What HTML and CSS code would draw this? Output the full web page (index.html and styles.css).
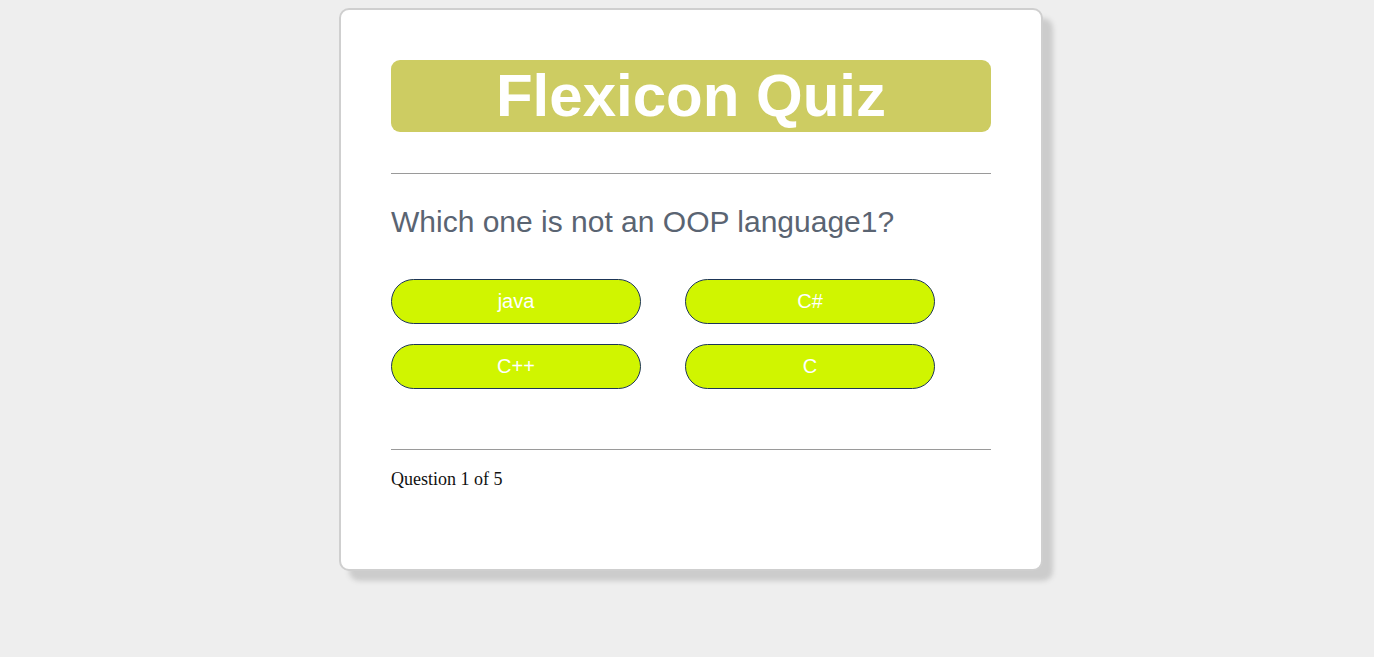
FILE: index.html
```html
<!DOCTYPE html>
<html>
<head>
<meta charset="utf-8">
<link rel="stylesheet" href="styles.css">
</head>
<body>
<div class="page">
  <div class="card">
    <h1 class="title">Flexicon Quiz</h1>
    <div class="rule rule-top"></div>
    <p class="question">Which one is not an OOP language1?</p>
    <div class="answers">
      <button class="answer">java</button>
      <button class="answer">C#</button>
      <button class="answer">C++</button>
      <button class="answer">C</button>
    </div>
    <div class="rule rule-bottom"></div>
    <p class="progress">Question 1 of 5</p>
  </div>
</div>
</body>
</html>
```
FILE: styles.css
```css
html, body {
  margin: 0;
  padding: 0;
  background: #eeeeee;
}
.page {
  display: flex;
  justify-content: center;
  align-items: flex-start;
  padding: 8px 0 0 8px;
  min-height: 100vh;
  box-sizing: border-box;
}
.card {
  box-sizing: border-box;
  width: 704px;
  height: 563px;
  background: #fff;
  border: 2px solid #cfcfcf;
  border-radius: 10px;
  box-shadow: 10px 10px 5px #cccccc;
  padding: 50px 50px 0 50px;
  display: flex;
  flex-direction: column;
}
.title {
  margin: 0;
  height: 72px;
  line-height: 72px;
  background: #cdcc62;
  border-radius: 9px;
  color: #fff;
  text-align: center;
  font-family: "Liberation Sans", Arial, sans-serif;
  font-weight: bold;
  font-size: 60px;
}
.rule {
  border-top: 1px solid #9a9a9a;
  height: 0;
}
.rule-top {
  margin-top: 41px;
}
.question {
  margin: 31px 0 0 0;
  font-family: "Liberation Sans", Arial, sans-serif;
  font-size: 30px;
  line-height: 34px;
  color: #5a6472;
}
.answers {
  margin-top: 40px;
  display: grid;
  grid-template-columns: 250px 250px;
  column-gap: 44px;
  row-gap: 20px;
}
.answer {
  box-sizing: border-box;
  height: 45px;
  border: 1px solid #1d3557;
  border-radius: 23px;
  background: #d0f500;
  color: #fff;
  font-family: "Liberation Sans", Arial, sans-serif;
  font-size: 20px;
  padding: 0;
  cursor: pointer;
}
.rule-bottom {
  margin-top: 60px;
}
.progress {
  margin: 19px 0 0 0;
  font-family: "Liberation Serif", "Times New Roman", serif;
  font-size: 18px;
  line-height: 20px;
  color: #111;
}
```
